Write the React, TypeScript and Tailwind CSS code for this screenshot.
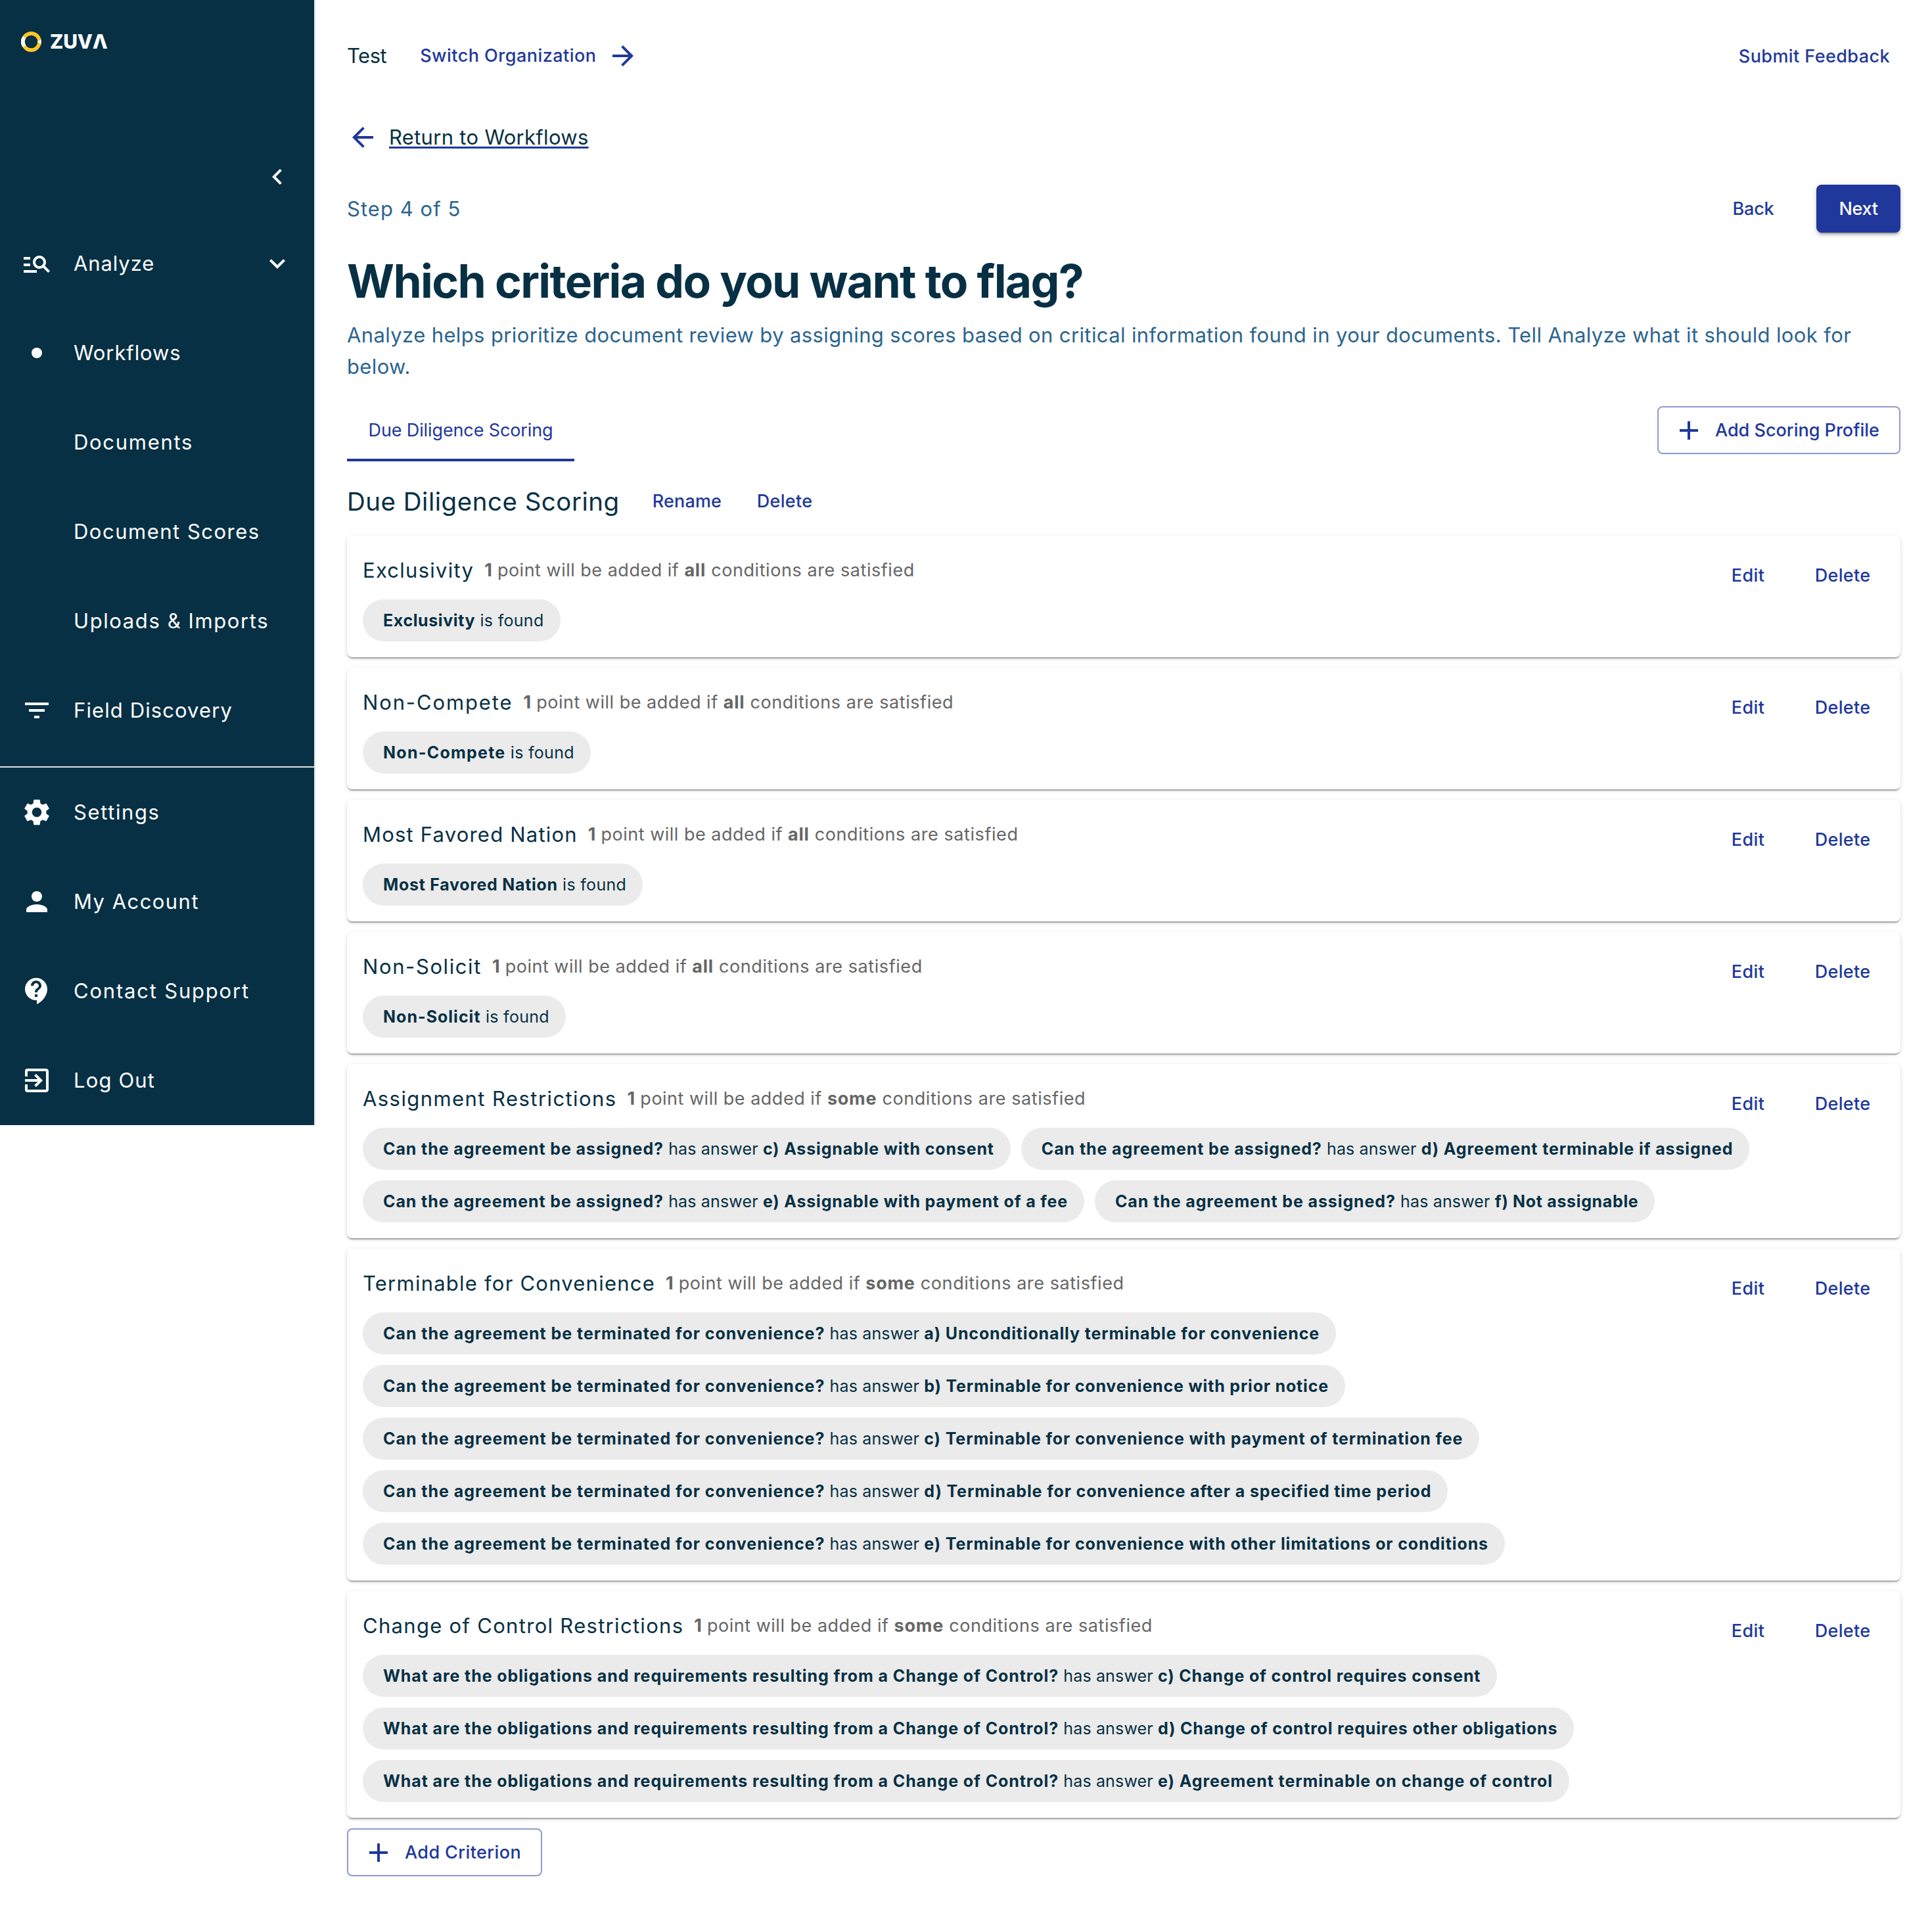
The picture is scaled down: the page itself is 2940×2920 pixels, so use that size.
import type { ReactNode } from "react";
import { MdAdd, MdArrowBack, MdArrowForward, MdChevronLeft, MdContactSupport, MdExitToApp, MdFilterList, MdKeyboardArrowDown, MdManageSearch, MdPerson, MdSettings } from "react-icons/md";

type Part = { text: string; bold?: boolean; tracking: string };
type Criterion = { title: string; tracking: string; rule: "all" | "some"; chips: Part[][] };

const isFound = (name: string, tracking: string): Part[] => [
  { text: name, bold: true, tracking },
  { text: " is found", tracking: "tracking-[0.3px]" },
];

const hasAnswer = (question: string, questionTracking: string, answer: string, tracking: string): Part[] => [
  { text: question, bold: true, tracking: questionTracking },
  { text: " has answer ", tracking: "tracking-[0.15px]" },
  { text: answer, bold: true, tracking },
];

const assigned = (answer: string, tracking: string) =>
  hasAnswer("Can the agreement be assigned?", "tracking-[0.9px]", answer, tracking);
const terminated = (answer: string, tracking: string) =>
  hasAnswer("Can the agreement be terminated for convenience?", "tracking-[0.97px]", answer, tracking);
const control = (answer: string, tracking: string) =>
  hasAnswer("What are the obligations and requirements resulting from a Change of Control?", "tracking-[0.9px]", answer, tracking);

const criteria: Criterion[] = [
  { title: "Exclusivity", tracking: "tracking-[1.25px]", rule: "all", chips: [isFound("Exclusivity", "tracking-[0.6px]")] },
  { title: "Non-Compete", tracking: "tracking-[1.87px]", rule: "all", chips: [isFound("Non-Compete", "tracking-[1.25px]")] },
  { title: "Most Favored Nation", tracking: "tracking-[1.2px]", rule: "all", chips: [isFound("Most Favored Nation", "tracking-[0.7px]")] },
  { title: "Non-Solicit", tracking: "tracking-[1.6px]", rule: "all", chips: [isFound("Non-Solicit", "tracking-[1px]")] },
  {
    title: "Assignment Restrictions",
    tracking: "tracking-[1.43px]",
    rule: "some",
    chips: [
      assigned("c) Assignable with consent", "tracking-[0.84px]"),
      assigned("d) Agreement terminable if assigned", "tracking-[0.87px]"),
      assigned("e) Assignable with payment of a fee", "tracking-[0.82px]"),
      assigned("f) Not assignable", "tracking-[0.66px]"),
    ],
  },
  {
    title: "Terminable for Convenience",
    tracking: "tracking-[1.23px]",
    rule: "some",
    chips: [
      terminated("a) Unconditionally terminable for convenience", "tracking-[0.86px]"),
      terminated("b) Terminable for convenience with prior notice", "tracking-[0.82px]"),
      terminated("c) Terminable for convenience with payment of termination fee", "tracking-[0.89px]"),
      terminated("d) Terminable for convenience after a specified time period", "tracking-[0.88px]"),
      terminated("e) Terminable for convenience with other limitations or conditions", "tracking-[0.88px]"),
    ],
  },
  {
    title: "Change of Control Restrictions",
    tracking: "tracking-[1.3px]",
    rule: "some",
    chips: [
      control("c) Change of control requires consent", "tracking-[0.84px]"),
      control("d) Change of control requires other obligations", "tracking-[0.82px]"),
      control("e) Agreement terminable on change of control", "tracking-[0.93px]"),
    ],
  },
];

function TextButton({ children, className = "" }: { children: ReactNode; className?: string }) {
  return (
    <button className={`flex h-[73px] min-w-32 items-center justify-center px-4 pt-[2px] text-[27px] font-medium text-[#20389b] ${className}`}>
      {children}
    </button>
  );
}

function OutlinedButton({ children, className = "" }: { children: ReactNode; className?: string }) {
  return (
    <button className={`flex h-[73px] items-center gap-4 rounded-lg border-2 border-[#8f9bcd] pl-[22px] text-[27px] font-medium whitespace-nowrap text-[#20389b] ${className}`}>
      <MdAdd className="size-12 shrink-0" />
      <span className="pt-[2px]">{children}</span>
    </button>
  );
}

function NavItem({ icon, label, tracking, children }: { icon?: ReactNode; label: string; tracking: string; children?: ReactNode }) {
  return (
    <a className="flex h-[136px] items-center pr-8 pl-8">
      <span className="flex w-20 shrink-0 items-center">{icon}</span>
      <span className={`text-[31px] whitespace-nowrap ${tracking}`}>{label}</span>
      <span className="ml-auto">{children}</span>
    </a>
  );
}

function Sidebar() {
  return (
    <aside className="flex h-[1712px] w-[480px] shrink-0 flex-col border-r-2 border-[#e0e0e0] bg-[#073044] text-white">
      <div className="flex h-[126px] items-center gap-[13px] pl-8">
        <svg viewBox="0 0 31 31" className="size-[31px]" fill="none">
          <circle cx="15.5" cy="15.5" r="12.6" stroke="#ffc629" strokeWidth="5.6" />
          <path d="M4.9 8.7A12.6 12.6 0 0 0 4.9 22.3" stroke="#fff" strokeWidth="5.6" />
          <path d="M24.5 15.5l6-3.4v6.8z" fill="#fff" />
        </svg>
        <span className="text-[30px] font-extrabold tracking-[-0.2px]">ZUVΛ</span>
      </div>
      <div className="flex h-[207px] items-center justify-end pt-[79px] pr-8">
        <MdChevronLeft className="size-12" />
      </div>
      <nav className="flex h-[833px] flex-col">
        <NavItem icon={<MdManageSearch className="size-12" />} label="Analyze" tracking="tracking-[0.9px]">
          <MdKeyboardArrowDown className="size-12" />
        </NavItem>
        <NavItem icon={<span className="ml-4 size-4 rounded-full bg-white" />} label="Workflows" tracking="tracking-[0.9px]" />
        <NavItem label="Documents" tracking="tracking-[1.7px]" />
        <NavItem label="Document Scores" tracking="tracking-[1.5px]" />
        <NavItem label="Uploads & Imports" tracking="tracking-[1.6px]" />
        <NavItem icon={<MdFilterList className="size-12" />} label="Field Discovery" tracking="tracking-[1.1px]" />
      </nav>
      <nav className="flex flex-col border-t-2 border-[#e0e0e0]">
        <NavItem icon={<MdSettings className="size-12" />} label="Settings" tracking="tracking-[1.6px]" />
        <NavItem icon={<MdPerson className="size-12" />} label="My Account" tracking="tracking-[1.45px]" />
        <NavItem icon={<MdContactSupport className="size-12" />} label="Contact Support" tracking="tracking-[1.8px]" />
        <NavItem icon={<MdExitToApp className="size-12" />} label="Log Out" tracking="tracking-[1.15px]" />
      </nav>
    </aside>
  );
}

function CriterionCard({ title, tracking, rule, chips }: Criterion) {
  return (
    <section className="rounded-lg bg-white p-6 shadow-[0_4px_2px_-2px_rgba(0,0,0,0.2),0_2px_2px_rgba(0,0,0,0.14),0_2px_6px_rgba(0,0,0,0.12)]">
      <div className="flex h-[73px] justify-between">
        <div className="flex h-14 items-center gap-4 leading-none">
          <h3 className={`text-[31px] whitespace-nowrap ${tracking}`}>{title}</h3>
          <p className="text-[27px] whitespace-nowrap text-[#666]">
            <b>1</b>
            <span className="tracking-[0.5px]"> point will be added if </span>
            <b className="tracking-[0.75px]">{rule}</b>
            <span className="tracking-[0.57px]"> conditions are satisfied</span>
          </p>
        </div>
        <div className="flex gap-4">
          <TextButton className="tracking-[0.4px]">Edit</TextButton>
          <TextButton className="tracking-[0.3px]">Delete</TextButton>
        </div>
      </div>
      <ul className="flex flex-wrap gap-4">
        {chips.map((parts, i) => (
          <li key={i} className="flex h-16 items-center rounded-full bg-[#ebebeb] pt-[2px] pr-[25px] pl-[31px] text-[25px] whitespace-pre">
            {parts.map((part) => (
              <span key={part.text} className={`${part.bold ? "font-bold" : "font-normal"} ${part.tracking}`}>
                {part.text}
              </span>
            ))}
          </li>
        ))}
      </ul>
    </section>
  );
}

export default function App() {
  return (
    <div className="flex h-[2920px] w-[2940px] items-start bg-white font-['Inter',sans-serif] text-[#073044]">
      <Sidebar />
      <main className="flex grow flex-col px-12">
        <header className="flex h-[170px] items-center">
          <span className="text-[31px] tracking-[-0.5px]">Test</span>
          <button className="ml-[51px] flex items-center gap-4 text-[27px] font-medium text-[#20389b]">
            <span className="tracking-[0.48px]">Switch Organization</span>
            <MdArrowForward className="size-12" />
          </button>
          <TextButton className="ml-auto tracking-[0.42px]">Submit Feedback</TextButton>
        </header>

        <a className="flex h-[78px] items-center gap-4 text-[31px]">
          <MdArrowBack className="size-12 text-[#20389b]" />
          <span className="tracking-[0.3px] underline decoration-[#20389b] decoration-[3px] underline-offset-[3px] [text-decoration-skip-ink:none]">
            Return to Workflows
          </span>
        </a>

        <div className="mt-[33px] flex h-[73px] items-center">
          <span className="pt-[2px] text-[31px] tracking-[1.05px] text-[#2b6490]">Step 4 of 5</span>
          <TextButton className="ml-auto tracking-[-0.2px]">Back</TextButton>
          <button className="ml-8 h-[73px] w-32 rounded-lg bg-[#20389b] pt-[2px] text-[27px] font-medium tracking-[-0.3px] text-white shadow-[0_6px_2px_-4px_rgba(0,0,0,0.2),0_4px_4px_rgba(0,0,0,0.14),0_2px_10px_rgba(0,0,0,0.12)]">
            Next
          </button>
        </div>

        <h1 className="mt-[26px] mb-[10px] text-[69.5px] leading-[96px] font-bold tracking-[-1.65px]">
          Which criteria do you want to flag?
        </h1>
        <p className="text-[31px] leading-[48px] tracking-[0.38px] text-[#2b6490]">
          Analyze helps prioritize document review by assigning scores based on critical information found in your documents. Tell Analyze
          what it should look for below.
        </p>

        <div className="mt-6 flex h-24 justify-between">
          <div className="flex h-24 w-[346px] items-center justify-center border-b-4 border-[#20389b] pt-[6px] text-[27px] tracking-[-0.12px] text-[#20389b]">
            Due Diligence Scoring
          </div>
          <OutlinedButton className="mt-3 w-[370px]">Add Scoring Profile</OutlinedButton>
        </div>

        <div className="mt-6 mb-4 flex h-[73px] items-center">
          <h2 className="mr-[34px] pt-[2px] text-[38.5px] tracking-[0.5px]">Due Diligence Scoring</h2>
          <TextButton className="mr-4 tracking-[0.15px]">Rename</TextButton>
          <TextButton className="tracking-[0.3px]">Delete</TextButton>
        </div>

        <div className="flex flex-col gap-4">
          {criteria.map((c) => (
            <CriterionCard key={c.title} {...c} />
          ))}
        </div>
        <OutlinedButton className="mt-4 w-[297px] tracking-[0.4px]">Add Criterion</OutlinedButton>
      </main>
    </div>
  );
}
